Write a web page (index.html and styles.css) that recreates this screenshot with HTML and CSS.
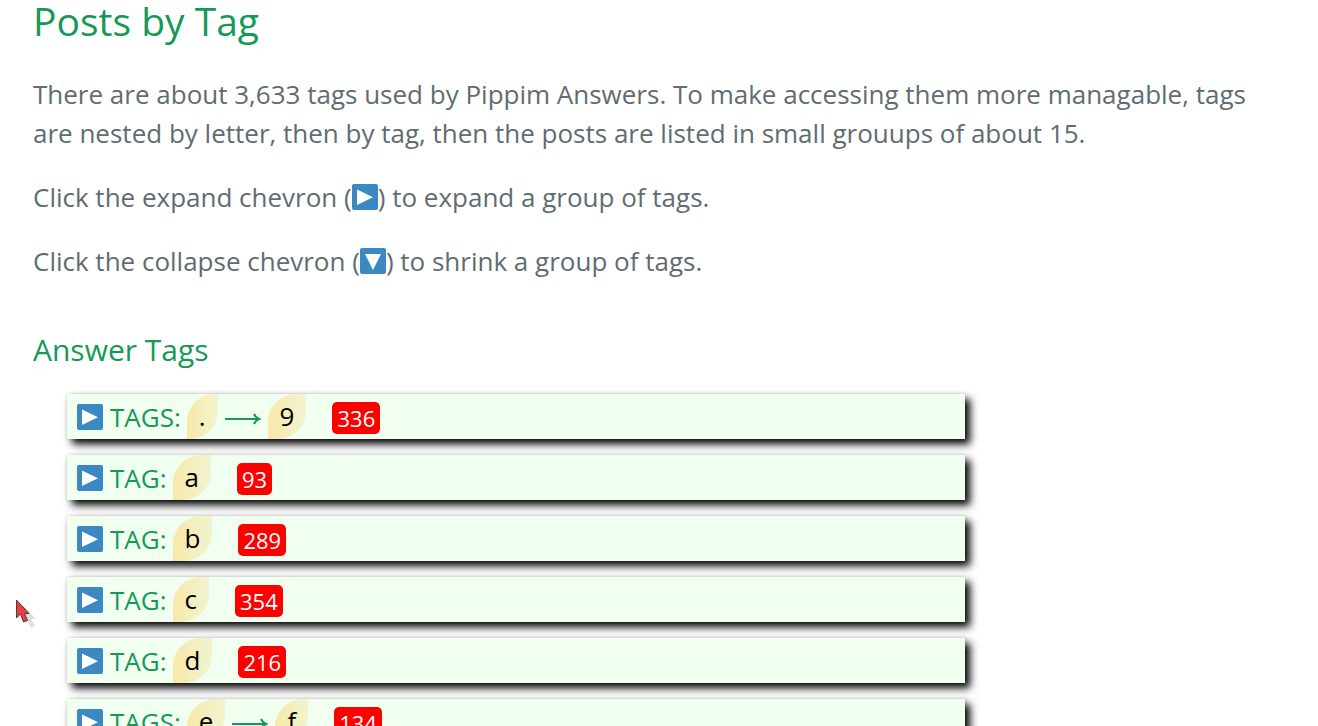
FILE: index.html
```html
<!DOCTYPE html>
<html lang="en">
<head>
<meta charset="utf-8">
<title>Posts by Tag</title>
<link rel="stylesheet" href="styles.css">
</head>
<body>
<svg class="symbols" aria-hidden="true">
  <symbol id="right" viewBox="0 0 26 26"><rect width="26" height="26" rx="2" fill="#3b88c3"/><path d="M5 5.500v15.500l16-7.750z" fill="#fff"/></symbol>
  <symbol id="down" viewBox="0 0 26 26"><rect width="26" height="26" rx="2" fill="#3b88c3"/><path d="M5 6h16l-8 16z" fill="#fff"/></symbol>
  <symbol id="arrow" viewBox="0 0 36 12"><path d="M0 6h34M29 1q2 4 5 5-3 1-5 5" fill="none" stroke="#159957" stroke-width="2"/></symbol>
</svg>
<main class="content">
  <h1 class="title">Posts by Tag</h1>
  <p class="text">There are about 3,633 tags used by Pippim Answers. To make accessing them more managable, tags are nested by letter, then by tag, then the posts are listed in small grouups of about 15.</p>
  <p class="text">Click the expand chevron (<svg class="chevron"><use href="#right"/></svg>) to expand a group of tags.</p>
  <p class="text">Click the collapse chevron (<svg class="chevron"><use href="#down"/></svg>) to shrink a group of tags.</p>
  <h2 class="subtitle">Answer Tags</h2>
  <div class="groups">
    <details class="group"><summary class="row"><svg class="chevron"><use href="#right"/></svg><span class="label">TAGS:</span><mark class="leaf">.</mark><svg class="arrow"><use href="#arrow"/></svg><mark class="leaf">9</mark><span class="count">336</span></summary></details>
    <details class="group"><summary class="row"><svg class="chevron"><use href="#right"/></svg><span class="label">TAG:</span><mark class="leaf">a</mark><span class="count">93</span></summary></details>
    <details class="group"><summary class="row"><svg class="chevron"><use href="#right"/></svg><span class="label">TAG:</span><mark class="leaf">b</mark><span class="count">289</span></summary></details>
    <details class="group"><summary class="row"><svg class="chevron"><use href="#right"/></svg><span class="label">TAG:</span><mark class="leaf">c</mark><span class="count">354</span></summary></details>
    <details class="group"><summary class="row"><svg class="chevron"><use href="#right"/></svg><span class="label">TAG:</span><mark class="leaf">d</mark><span class="count">216</span></summary></details>
    <details class="group"><summary class="row"><svg class="chevron"><use href="#right"/></svg><span class="label">TAGS:</span><mark class="leaf">e</mark><svg class="arrow"><use href="#arrow"/></svg><mark class="leaf">f</mark><span class="count">134</span></summary></details>
  </div>
</main>
<svg class="pointer" viewBox="0 0 24 30" aria-hidden="true">
  <path d="M8 6v18l4-3 4 8 4-2-4-7h5z" fill="#e2dcde"/>
  <path d="M1.500 1v18l4-4 3 8 4-1.500-3-7h4.500z" fill="#ef3b3b" stroke="#3c4549"/>
</svg>
</body>
</html>
```
FILE: styles.css
```css
body {
  margin: 0;
  background: #fff;
  color: #606c71;
  font: 26px/39px "Open Sans", sans-serif;
}

.symbols {
  display: none;
}

.content {
  padding: 0 33px;
}

.title,
.subtitle {
  margin: 0;
  color: #159957;
  font-weight: 400;
}

.title {
  padding-bottom: 33px;
  font-size: 39px;
  line-height: 42px;
}

.text {
  margin: 0 0 25px;
}

.chevron {
  width: 26px;
  height: 26px;
  flex: none;
  vertical-align: -3px;
}

.subtitle {
  padding: 27px 0;
  font-size: 30px;
  line-height: 34px;
}

.groups {
  display: flex;
  flex-direction: column;
  gap: 16px;
  max-width: 898px;
  margin-left: 34px;
}

.group {
  background: #f0fff0;
  box-shadow: 5px 5px 8px #000, 0 0 3px rgba(0, 0, 0, 0.15);
}

.row {
  display: flex;
  align-items: center;
  height: 45px;
  padding-left: 10px;
  color: #159957;
  list-style: none;
  cursor: pointer;
}

.label {
  margin: 1px 6px 0 7px;
}

.leaf {
  padding: 0 12px;
  border-radius: 28px 0;
  background: linear-gradient(to right, #f7e9a8, #f1f4d0);
  color: #000;
  line-height: 45px;
}

.arrow {
  width: 36px;
  height: 12px;
  margin: 4px 7px 0;
}

.count {
  margin: 3px 0 0 26px;
  padding: 0 5px;
  border-radius: 5px;
  background: #f00;
  color: #fff;
  font-size: 22px;
  line-height: 32px;
}

.pointer {
  position: absolute;
  left: 15px;
  top: 599px;
  width: 24px;
  height: 30px;
}
```
